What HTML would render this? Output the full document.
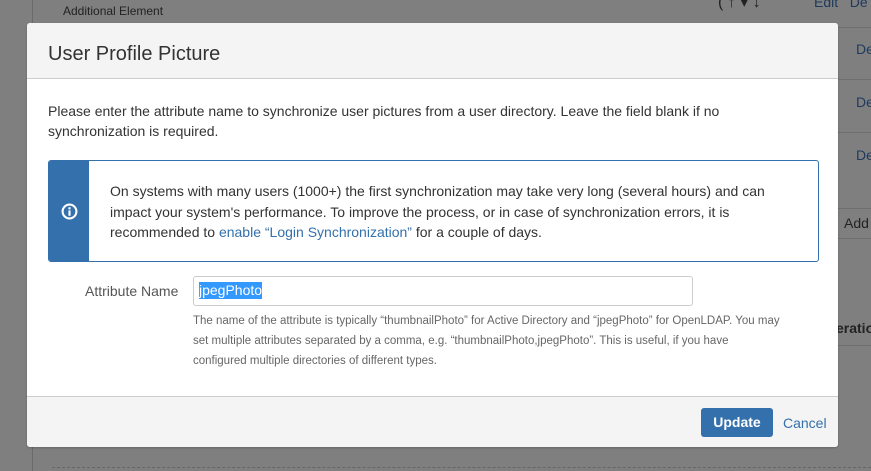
<!DOCTYPE html>
<html><head><style>
body{margin:0;width:871px;height:471px;background:#7f7f7f;position:relative;overflow:hidden;font-family:"Liberation Sans",sans-serif;}
.a{position:absolute}
.hl{position:absolute;height:1px;background:#6f6f6f}
.modal{position:absolute;left:27px;top:23px;width:811px;height:424px;background:#fff;border-radius:3px;overflow:hidden;box-shadow:0 1px 2px rgba(0,0,0,.2)}
.hd{height:55px;background:#f4f4f4;border-bottom:1px solid #ccc;}
.hd h2{margin:0;position:absolute;left:21px;top:20px;font-size:20px;font-weight:normal;color:#333}
p{margin:0}
.ft{position:absolute;left:0;top:373px;width:811px;height:51px;background:#f4f4f4;border-top:1px solid #ccc}
</style></head><body>
<div class="a" style="left:32px;top:0;width:1px;height:471px;background:#6a6a6a"></div>
<div class="a" style="left:63px;top:4px;font-size:12px;color:#222">Additional Element</div>
<div class="a" style="left:718px;top:-8px;font-size:16px;color:#222">( ↑ ▾ ↓</div>
<div class="a" style="left:814px;top:-6px;font-size:14px;color:#1e3a5c">Edit&nbsp;&nbsp; De</div>
<div class="hl" style="left:838px;top:27px;width:33px"></div>
<div class="hl" style="left:838px;top:79px;width:33px"></div>
<div class="hl" style="left:838px;top:132px;width:33px"></div>
<div class="hl" style="left:838px;top:208px;width:33px"></div>
<div class="hl" style="left:838px;top:238px;width:33px"></div>
<div class="hl" style="left:838px;top:345px;width:33px"></div>
<div class="a" style="left:856px;top:41px;font-size:14px;color:#1e3a5c">De</div>
<div class="a" style="left:856px;top:94px;font-size:14px;color:#1e3a5c">De</div>
<div class="a" style="left:856px;top:147px;font-size:14px;color:#1e3a5c">De</div>
<div class="a" style="left:844px;top:215px;font-size:14px;color:#222">Add</div>
<div class="a" style="left:836px;top:320px;font-size:14px;font-weight:bold;color:#222">eratio</div>
<div class="a" style="left:52px;top:467px;width:819px;border-top:1px dashed #666"></div>
<div class="modal">
 <div class="hd"><h2>User Profile Picture</h2></div>
 <p class="a" style="left:21px;top:78px;width:760px;font-size:14px;line-height:20px;color:#333">Please enter the attribute name to synchronize user pictures from a user directory. Leave the field blank if no synchronization is required.</p>
 <div class="a" style="left:21px;top:137px;width:769px;height:100px;border:1px solid #3370ac;border-radius:3px;overflow:hidden">
  <div class="a" style="left:0;top:0;width:40px;height:100px;background:#3370ac"></div>
  <svg class="a" style="left:12px;top:42px" width="17" height="17" viewBox="0 0 16 16"><circle cx="8" cy="8" r="6.5" fill="none" stroke="#fff" stroke-width="2"/><rect x="7" y="7" width="2" height="5" fill="#fff"/><rect x="7" y="4" width="2" height="2" fill="#fff"/></svg>
  <p class="a" style="left:61px;top:20px;width:690px;font-size:14px;line-height:20.5px;color:#333">On systems with many users (1000+) the first synchronization may take very long (several hours) and can impact your system's performance. To improve the process, or in case of synchronization errors, it is recommended to <span style="color:#3370ac">enable “Login Synchronization”</span> for a couple of days.</p>
 </div>
 <div class="a" style="left:58px;top:260px;font-size:14px;color:#555">Attribute Name</div>
 <div class="a" style="left:166px;top:253px;width:498px;height:28px;border:1px solid #ccc;border-radius:3px"><span class="a" style="left:5px;top:5px;font-size:14px;background:#3399ff;color:#fff;line-height:17px">jpegPhoto</span></div>
 <p class="a" style="left:166px;top:288px;width:620px;font-size:11.5px;line-height:20px;color:#666">The name of the attribute is typically “thumbnailPhoto” for Active Directory and “jpegPhoto” for OpenLDAP. You may<br>set multiple attributes separated by a comma, e.g. “thumbnailPhoto,jpegPhoto”. This is useful, if you have<br>configured multiple directories of different types.</p>
 <div class="ft">
  <div class="a" style="left:674px;top:11px;width:72px;height:29px;background:#3370ac;border-radius:3px;color:#fff;font-weight:bold;font-size:14px;text-align:center;line-height:29px">Update</div>
  <div class="a" style="left:756px;top:18px;font-size:14px;color:#3370ac">Cancel</div>
 </div>
</div>
</body></html>
